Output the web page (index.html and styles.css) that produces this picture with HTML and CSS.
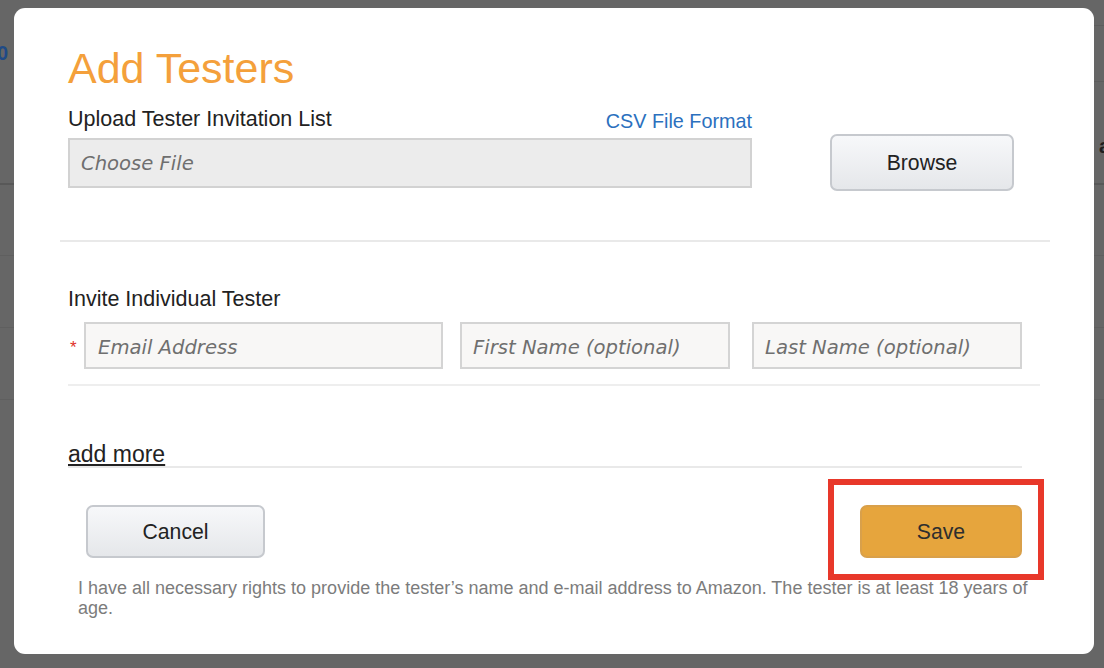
FILE: index.html
```html
<!DOCTYPE html>
<html lang="en">
<head>
<meta charset="utf-8">
<title>Add Testers</title>
<link rel="stylesheet" href="styles.css">
</head>
<body>
<div class="page">
  <div class="bg-head">
    <div class="bg-num">0</div>
    <div class="bg-right">
      <div class="bg-r1"></div>
      <div class="bg-r2"><span class="bg-a">a</span></div>
    </div>
  </div>
  <div class="bg-row"></div>
  <div class="bg-row"></div>
  <div class="bg-row"></div>
  <div class="bg-row last"></div>
</div>

<div class="modal">
  <h1 class="title">Add Testers</h1>

  <div class="upload-labels">
    <span class="label">Upload Tester Invitation List</span>
    <a class="link" href="#">CSV File Format</a>
  </div>
  <div class="upload-row">
    <input class="file-input" type="text" placeholder="Choose File">
    <button class="btn btn-browse" type="button">Browse</button>
  </div>

  <div class="divider wide"></div>

  <div class="label invite-label">Invite Individual Tester</div>
  <div class="fields">
    <span class="req">*</span>
    <input class="field field-email" type="text" placeholder="Email Address">
    <input class="field field-first" type="text" placeholder="First Name (optional)">
    <input class="field field-last" type="text" placeholder="Last Name (optional)">
  </div>
  <div class="divider row-div"></div>

  <a class="add-more" href="#">add more</a>
  <div class="divider more-div"></div>

  <div class="actions">
    <button class="btn btn-cancel" type="button">Cancel</button>
    <div class="save-wrap">
      <button class="btn btn-save" type="button">Save</button>
      <div class="highlight"></div>
    </div>
  </div>

  <p class="disclaimer">I have all necessary rights to provide the tester’s name and e-mail address to Amazon. The tester is at least 18 years of age.</p>
</div>
</body>
</html>
```

FILE: styles.css
```css
* { box-sizing: border-box; }

html, body {
  margin: 0;
  padding: 0;
  width: 1104px;
  height: 668px;
  overflow: hidden;
  background: #666666;
  font-family: "Liberation Sans", Arial, sans-serif;
}

/* background page (dimmed) */
.page {
  display: flex;
  flex-direction: column;
  width: 1104px;
}
.bg-head {
  height: 183px;
  display: flex;
  justify-content: space-between;
}
.bg-num {
  margin-top: 42px;
  margin-left: -3px;
  font-size: 20px;
  font-weight: bold;
  color: #1f4a86;
  line-height: 22px;
}
.bg-right {
  width: 400px;
  padding-top: 25px;
}
.bg-r1 {
  height: 56px;
  border-top: 1px solid #5d5d5d;
}
.bg-r2 {
  border-top: 1px solid #5d5d5d;
  height: 102px;
  display: flex;
  justify-content: flex-end;
  padding-top: 54px;
}
.bg-a {
  font-size: 20px;
  font-weight: bold;
  color: #1e1e1e;
  line-height: 20px;
  margin-right: -6px;
}
.bg-row {
  height: 72px;
  border-top: 1px solid #5f5f5f;
}
.bg-row.last { height: 100px; }
.page .bg-row:nth-child(2) { border-top: 2px solid #585858; }

/* modal */
.modal {
  position: absolute;
  left: 14px;
  top: 8px;
  width: 1080px;
  height: 646px;
  background: #ffffff;
  border-radius: 11px;
  padding: 36px 0 0 54px;
}

.title {
  margin: 0;
  font-size: 43px;
  line-height: 48px;
  font-weight: normal;
  color: #f4a03b;
}

.label {
  font-size: 21.5px;
  line-height: 24px;
  color: #222222;
}

.upload-labels {
  margin-top: 15px;
  width: 684px;
  height: 24px;
  display: flex;
  justify-content: space-between;
  align-items: baseline;
}
.link {
  font-size: 19.8px;
  color: #2b70be;
  text-decoration: none;
  position: relative;
  top: 2px;
}

.upload-row {
  margin-top: 3px;
  display: flex;
  align-items: center;
  height: 57px;
}

.file-input,
.field {
  font-family: "DejaVu Sans", Verdana, sans-serif;
  font-style: italic;
  font-size: 19.6px;
  color: #333;
  outline: none;
  margin: 0;
}
.file-input::placeholder,
.field::placeholder {
  color: #6f6f6f;
  opacity: 1;
}

.file-input {
  width: 684px;
  height: 50px;
  background: #ececec;
  border: 2px solid #d2d2d2;
  padding: 2px 11px 0;
}

.btn {
  font-family: "Liberation Sans", Arial, sans-serif;
  font-size: 21.2px;
  color: #222222;
  border-radius: 7px;
  cursor: pointer;
  padding: 0;
}
.btn-browse,
.btn-cancel {
  background: linear-gradient(#f7f8fa, #e5e7ea);
  border: 2px solid #c6c9ce;
}
.btn-browse {
  margin-left: 78px;
  width: 184px;
  height: 57px;
}

.divider {
  height: 2px;
  background: #e9e9e9;
}
.divider.wide {
  margin-top: 49px;
  margin-left: -8px;
  width: 990px;
}

.invite-label {
  margin-top: 45px;
}

.fields {
  margin-top: 11px;
  display: flex;
  align-items: flex-start;
  height: 47px;
}
.req {
  width: 16px;
  padding-left: 2px;
  color: #e0302a;
  font-size: 17px;
  line-height: 17px;
  margin-top: 17px;
}
.field {
  height: 47px;
  background: #f8f7f6;
  border: 2px solid #d4d4d4;
  padding: 4px 12px 0;
}
.field-email { width: 359px; }
.field-first { width: 270px; margin-left: 17px; padding-left: 11px; }
.field-last { width: 270px; margin-left: 22px; padding-left: 11px; }

.divider.row-div {
  margin-top: 15px;
  width: 972px;
  background: #eeeeee;
}

.add-more {
  display: inline-block;
  margin-top: 57px;
  font-size: 23px;
  line-height: 22px;
  color: #222222;
  text-decoration: underline;
  text-underline-offset: 2px;
}

.divider.more-div {
  width: 954px;
  background: #e9e9e9;
}

.actions {
  margin-top: 37px;
  width: 954px;
  height: 53px;
  display: flex;
  justify-content: space-between;
  align-items: center;
}
.btn-cancel {
  margin-left: 18px;
  width: 179px;
  height: 53px;
}
.save-wrap {
  position: relative;
  width: 162px;
  height: 53px;
}
.btn-save {
  width: 162px;
  height: 53px;
  background: #e6a53d;
  border: 2px solid #d9a04a;
  color: #2e2e2e;
}
.highlight {
  position: absolute;
  left: -32px;
  top: -26px;
  width: 216px;
  height: 101px;
  border: 6px solid #e8382a;
  pointer-events: none;
}

.disclaimer {
  margin: 20px 0 0 10px;
  width: 960px;
  font-size: 18px;
  line-height: 20px;
  color: #7c7c7c;
}
```
